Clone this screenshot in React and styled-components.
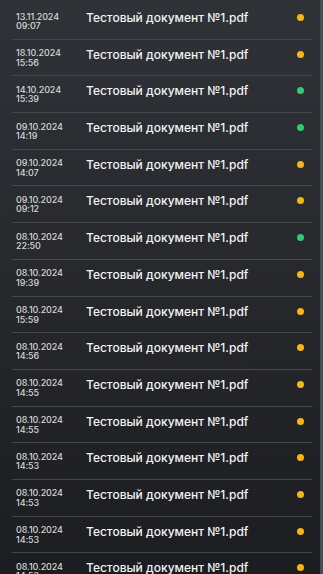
import React from 'react'
import styled, { createGlobalStyle } from 'styled-components'

const GlobalStyle = createGlobalStyle`
  html, body {
    margin: 0;
    padding: 0;
    background: #1c1d20;
  }
  * { box-sizing: border-box; }
`

const Screen = styled.div`
  width: 323px;
  height: 574px;
  overflow: hidden;
  display: flex;
  background: linear-gradient(180deg, #2f3237 0%, #26282c 50%, #1c1d20 100%);
  font-family: Inter, "Noto Sans", sans-serif;
`

const List = styled.div`
  flex: 1;
  padding: 3px 8px 0 12px;
`

const Scrollbar = styled.div`
  width: 3px;
  background: #4a4c51;
`

const Row = styled.div`
  height: 36.7px;
  display: flex;
  align-items: flex-start;
  padding-top: 8px;
  border-bottom: 1px solid #44474c;
`

const When = styled.div`
  width: 74px;
  padding-left: 4px;
  display: flex;
  flex-direction: column;
  color: #d4d5d7;
  font-size: 9px;
  font-weight: 500;
  line-height: 9.5px;
  letter-spacing: -0.1px;
  padding-top: 0.5px;
`

const Title = styled.div`
  flex: 1;
  color: #f4f4f5;
  font-size: 12px;
  font-weight: 500;
  line-height: 14px;
  white-space: nowrap;
`

const Dot = styled.span`
  width: 7px;
  height: 7px;
  border-radius: 50%;
  margin: 3px 8px 0 0;
  background: ${(p) => (p.status === 'done' ? '#2ecc71' : '#f6b614')};
`

const docs = [
  ['13.11.2024', '09:07', 'wait'],
  ['18.10.2024', '15:56', 'wait'],
  ['14.10.2024', '15:39', 'done'],
  ['09.10.2024', '14:19', 'done'],
  ['09.10.2024', '14:07', 'wait'],
  ['09.10.2024', '09:12', 'wait'],
  ['08.10.2024', '22:50', 'done'],
  ['08.10.2024', '19:39', 'wait'],
  ['08.10.2024', '15:59', 'wait'],
  ['08.10.2024', '14:56', 'wait'],
  ['08.10.2024', '14:55', 'wait'],
  ['08.10.2024', '14:55', 'wait'],
  ['08.10.2024', '14:53', 'wait'],
  ['08.10.2024', '14:53', 'wait'],
  ['08.10.2024', '14:53', 'wait'],
  ['08.10.2024', '14:53', 'wait'],
]

export default function App() {
  return (
    <>
      <GlobalStyle />
      <Screen>
        <List>
          {docs.map(([date, time, status], i) => (
            <Row key={i}>
              <When>
                <span>{date}</span>
                <span>{time}</span>
              </When>
              <Title>Тестовый документ №1.pdf</Title>
              <Dot status={status} />
            </Row>
          ))}
        </List>
        <Scrollbar />
      </Screen>
    </>
  )
}
